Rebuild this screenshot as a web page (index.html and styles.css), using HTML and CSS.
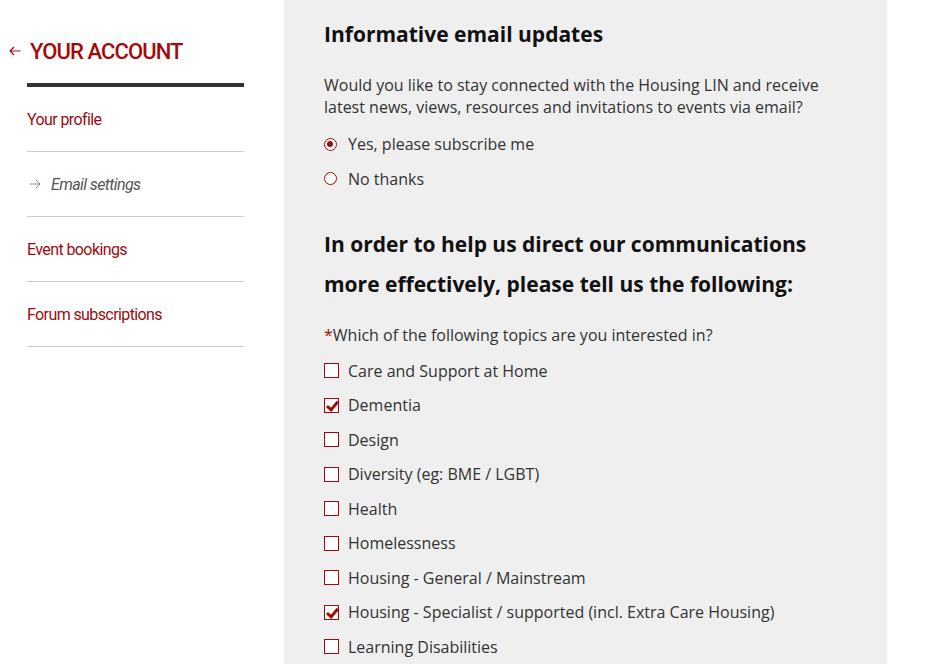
FILE: index.html
```html
<!DOCTYPE html>
<html lang="en">
<head>
    <meta charset="UTF-8">
    <meta name="viewport" content="width=device-width, initial-scale=1.0">
    <title>Your account - Email settings</title>
    <link rel="stylesheet" href="styles.css">
</head>
<body>
    <div class="page">
        <div class="sidebar">
            <h1 class="account-title">
                <svg class="back" width="12" height="10" viewBox="0 0 12 10"><path d="M11.5 5H1M5 1L1 5L5 9" fill="none" stroke="currentColor" stroke-width="1.2"/></svg>YOUR ACCOUNT
            </h1>
            <ul class="account-nav">
                <li><a href="#">Your profile</a></li>
                <li class="current"><svg class="arrow" width="11" height="10" viewBox="0 0 11 10"><path d="M0 5H10M6 1L10 5L6 9" fill="none" stroke="currentColor" stroke-width="1"/></svg>Email settings</li>
                <li><a href="#">Event bookings</a></li>
                <li><a href="#">Forum subscriptions</a></li>
            </ul>
        </div>
        <div class="panel">
            <h2>Informative email updates</h2>
            <p class="intro">Would you like to stay connected with the Housing LIN and receive latest news, views, resources and invitations to events via email?</p>
            <div class="options">
                <label class="option"><input type="radio" name="subscribe" checked> Yes, please subscribe me</label>
                <label class="option"><input type="radio" name="subscribe"> No thanks</label>
            </div>

            <h2 class="big">In order to help us direct our communications more effectively, please tell us the following:</h2>
            <p class="question"><span class="req">*</span>Which of the following topics are you interested in?</p>
            <div class="options topics">
                <label class="option"><input type="checkbox"> Care and Support at Home</label>
                <label class="option"><input type="checkbox" checked> Dementia</label>
                <label class="option"><input type="checkbox"> Design</label>
                <label class="option"><input type="checkbox"> Diversity (eg: BME / LGBT)</label>
                <label class="option"><input type="checkbox"> Health</label>
                <label class="option"><input type="checkbox"> Homelessness</label>
                <label class="option"><input type="checkbox"> Housing - General / Mainstream</label>
                <label class="option"><input type="checkbox" checked> Housing - Specialist / supported (incl. Extra Care Housing)</label>
                <label class="option"><input type="checkbox"> Learning Disabilities</label>
            </div>
        </div>
    </div>
</body>
</html>
```

FILE: styles.css
```css
html {
    font-family: "Open Sans", sans-serif;
}
body {
    margin: 0;
    background: #fff;
    color: #333;
}
.page {
    display: flex;
    height: 664px;
    overflow: hidden;
}
.sidebar {
    width: 217px;
    padding: 0 40px 0 27px;
    font-family: Roboto, sans-serif;
}
.account-title {
    display: flex;
    align-items: center;
    margin: 0 0 0 -18px;
    padding: 40px 0 19px 0;
    font-size: 22px;
    font-weight: 500;
    line-height: 24px;
    letter-spacing: -0.9px;
    color: #a30a0a;
}
.back {
    flex: none;
    margin: -2px 9px 0 0;
}
.account-nav {
    list-style: none;
    margin: 0;
    padding: 0;
    border-top: 4px solid #333;
}
.account-nav li {
    display: flex;
    align-items: center;
    height: 64px;
    border-bottom: 1px solid #ccc;
    font-size: 16px;
    letter-spacing: -0.6px;
}
.account-nav a {
    color: #9e0b0f;
    text-decoration: none;
}
.account-nav .current {
    color: #555;
    font-style: italic;
}
.arrow {
    flex: none;
    color: #888;
    margin: 0 10px 0 3px;
}
.panel {
    width: 523px;
    padding: 20px 40px 0 40px;
    background: #efefef;
}
h2 {
    margin: 0;
    font-size: 21px;
    line-height: 28px;
    font-weight: 700;
    color: #111;
}
h2.big {
    margin-top: 28px;
    line-height: 40px;
}
.intro, .question {
    margin: 27px 0 0 0;
    font-size: 16px;
    line-height: 21.5px;
}
.question {
    margin-top: 21px;
}
.req {
    color: #a30a0a;
}
.options {
    margin-top: 9px;
}
.options.topics {
    margin-top: 7px;
}
.option {
    display: flex;
    align-items: center;
    height: 34.5px;
    font-size: 16px;
}
.option input {
    appearance: none;
    -webkit-appearance: none;
    margin: 0 9px 0 0;
    flex: none;
    border: 1px solid #9e0b0f;
    background: #fff;
    position: relative;
    box-sizing: border-box;
}
.option input[type=radio] {
    width: 13px;
    height: 13px;
    margin-right: 11px;
    border: 1.5px solid #a30a0a;
    border-radius: 50%;
}
.option input[type=radio]:checked::after {
    content: "";
    position: absolute;
    left: 2px;
    top: 2px;
    width: 6px;
    height: 6px;
    border-radius: 50%;
    background: #a30a0a;
}
.option input[type=checkbox] {
    width: 15px;
    height: 15px;
}
.option input[type=checkbox]:checked::after {
    content: "";
    position: absolute;
    left: 4px;
    top: 0;
    width: 4px;
    height: 9px;
    border: solid #a30a0a;
    border-width: 0 3px 3px 0;
    transform: rotate(40deg);
}
```
